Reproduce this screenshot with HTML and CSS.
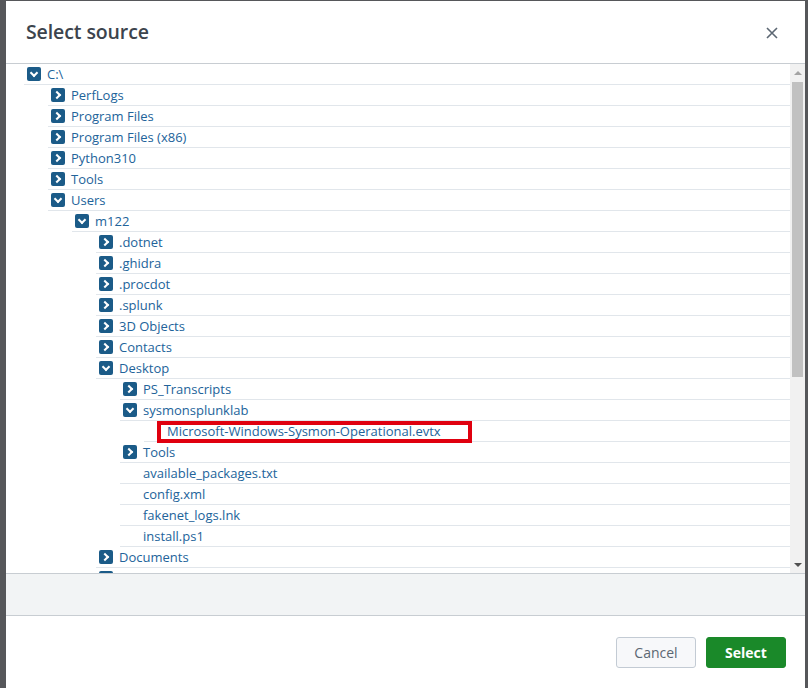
FILE: index.html
```html
<!DOCTYPE html>
<html>
<head>
<meta charset="utf-8">
<link rel="stylesheet" href="styles.css">
</head>
<body>
<div class="modal">
  <div class="header">
    <h1 class="title">Select source</h1>
    <svg class="close" width="12" height="12" viewBox="0 0 12 12"><path d="M1 1 L11 11 M11 1 L1 11" stroke="#5c6773" stroke-width="1.6" fill="none"/></svg>
  </div>
  <div class="body">
    <div class="tree">
      <ul class="level root">
        <li>
          <div class="row"><span class="ico down"></span><span class="name">C:\</span></div>
          <ul class="level">
            <li><div class="row"><span class="ico right"></span><span class="name">PerfLogs</span></div></li>
            <li><div class="row"><span class="ico right"></span><span class="name">Program Files</span></div></li>
            <li><div class="row"><span class="ico right"></span><span class="name">Program Files (x86)</span></div></li>
            <li><div class="row"><span class="ico right"></span><span class="name">Python310</span></div></li>
            <li><div class="row"><span class="ico right"></span><span class="name">Tools</span></div></li>
            <li>
              <div class="row"><span class="ico down"></span><span class="name">Users</span></div>
              <ul class="level">
                <li>
                  <div class="row"><span class="ico down"></span><span class="name">m122</span></div>
                  <ul class="level">
                    <li><div class="row"><span class="ico right"></span><span class="name">.dotnet</span></div></li>
                    <li><div class="row"><span class="ico right"></span><span class="name">.ghidra</span></div></li>
                    <li><div class="row"><span class="ico right"></span><span class="name">.procdot</span></div></li>
                    <li><div class="row"><span class="ico right"></span><span class="name">.splunk</span></div></li>
                    <li><div class="row"><span class="ico right"></span><span class="name">3D Objects</span></div></li>
                    <li><div class="row"><span class="ico right"></span><span class="name">Contacts</span></div></li>
                    <li>
                      <div class="row"><span class="ico down"></span><span class="name">Desktop</span></div>
                      <ul class="level">
                        <li><div class="row"><span class="ico right"></span><span class="name">PS_Transcripts</span></div></li>
                        <li>
                          <div class="row"><span class="ico down"></span><span class="name">sysmonsplunklab</span></div>
                          <ul class="level">
                            <li><div class="row file"><span class="name">Microsoft-Windows-Sysmon-Operational.evtx</span><span class="mark"></span></div></li>
                          </ul>
                        </li>
                        <li><div class="row"><span class="ico right"></span><span class="name">Tools</span></div></li>
                        <li><div class="row file"><span class="name">available_packages.txt</span></div></li>
                        <li><div class="row file"><span class="name">config.xml</span></div></li>
                        <li><div class="row file"><span class="name">fakenet_logs.lnk</span></div></li>
                        <li><div class="row file"><span class="name">install.ps1</span></div></li>
                      </ul>
                    </li>
                    <li><div class="row"><span class="ico right"></span><span class="name">Documents</span></div></li>
                    <li><div class="row"><span class="ico right"></span><span class="name">Downloads</span></div></li>
                  </ul>
                </li>
              </ul>
            </li>
          </ul>
        </li>
      </ul>
    </div>
    <div class="scrollbar">
      <div class="sb-btn"><span class="tri up"></span></div>
      <div class="sb-track"><div class="sb-thumb"></div></div>
      <div class="sb-btn"><span class="tri dn"></span></div>
    </div>
  </div>
  <div class="strip"></div>
  <div class="footer">
    <button class="btn cancel">Cancel</button>
    <button class="btn select">Select</button>
  </div>
</div>
</body>
</html>
```

FILE: styles.css
```css
html, body {
  margin: 0;
  padding: 0;
  height: 100%;
}
body {
  background: #56575a;
  font-family: "Open Sans", "Lato", sans-serif;
  overflow: hidden;
}
.modal {
  margin: 1px 3px 0 6px;
  height: 687px;
  background: #ffffff;
  display: flex;
  flex-direction: column;
}
.header {
  height: 62px;
  flex: none;
  border-bottom: 1px solid #c8cdd2;
  display: flex;
  align-items: center;
  justify-content: space-between;
  padding: 0 27px 0 20px;
}
.title {
  margin: 0;
  font-size: 19.5px;
  font-weight: 600;
  color: #3c444d;
  letter-spacing: -0.1px;
  position: relative;
  top: -1px;
}
.close {
  display: block;
  position: relative;
  top: 1px;
}
.body {
  height: 509px;
  flex: none;
  display: flex;
  border-bottom: 1px solid #c8cdd2;
  overflow: hidden;
}
.tree {
  flex: 1;
  overflow: hidden;
  padding: 0 0 0 18px;
}
ul.level {
  list-style: none;
  margin: 0;
  padding: 0 0 0 24px;
}
ul.root {
  padding-left: 0;
}
.row {
  height: 20px;
  border-bottom: 1px solid #e1e6eb;
  display: flex;
  align-items: center;
  padding-left: 3px;
  position: relative;
}
.row.file {
  padding-left: 23px;
}
.ico {
  width: 14px;
  height: 14px;
  border-radius: 2px;
  background: #1b5b88;
  margin-right: 6px;
  flex: none;
  position: relative;
}
.ico::after {
  content: "";
  position: absolute;
  width: 4px;
  height: 4px;
  border-right: 2px solid #fff;
  border-bottom: 2px solid #fff;
}
.ico.right::after {
  left: 3px;
  top: 4px;
  transform: rotate(-45deg);
}
.ico.down::after {
  left: 4px;
  top: 3px;
  transform: rotate(45deg);
}
.name {
  font-size: 13px;
  line-height: 20px;
  color: #22639a;
  white-space: nowrap;
}
.mark {
  position: absolute;
  left: 13px;
  top: 0;
  width: 307px;
  height: 14px;
  border: 4px solid #e0000f;
}
.scrollbar {
  width: 15px;
  flex: none;
  background: #f1f1f1;
  display: flex;
  flex-direction: column;
}
.sb-btn {
  height: 17px;
  flex: none;
  display: flex;
  align-items: center;
  justify-content: center;
}
.tri {
  width: 0;
  height: 0;
  border-left: 4px solid transparent;
  border-right: 4px solid transparent;
}
.tri.up {
  border-bottom: 4px solid #a3a3a3;
}
.tri.dn {
  border-top: 4px solid #505050;
}
.sb-track {
  flex: 1;
  padding: 1px 2px 0 2px;
}
.sb-thumb {
  height: 295px;
  background: #c1c1c1;
}
.strip {
  height: 41px;
  flex: none;
  background: #f2f4f5;
  border-bottom: 1px solid #c8cdd2;
}
.footer {
  flex: 1;
  display: flex;
  justify-content: flex-end;
  align-items: flex-start;
  gap: 10px;
  padding: 21px 19px 0 0;
}
.btn {
  width: 80px;
  height: 31px;
  border-radius: 3px;
  font-family: "Open Sans", "Lato", sans-serif;
  font-size: 14px;
  cursor: pointer;
}
.btn.cancel {
  background: #f7f8fa;
  border: 1px solid #c3cbd4;
  color: #5c6773;
  font-weight: 500;
}
.btn.select {
  background: #1a8929;
  border: 1px solid #1a8929;
  color: #ffffff;
  font-weight: 700;
}
```
